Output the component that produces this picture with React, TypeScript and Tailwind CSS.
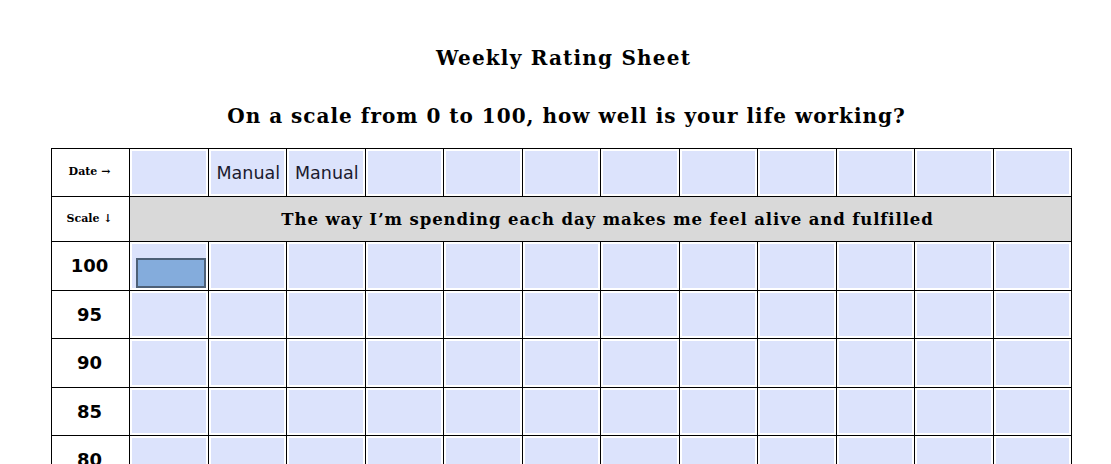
const dates = ["", "Manual", "Manual", "", "", "", "", "", "", "", "", ""];
const scale = [100, 95, 90, 85, 80];

export default function App() {
  return (
    <div className="min-h-screen bg-white pt-[44px] pl-[51px] font-['DejaVu_Serif',serif] text-black">
      <div className="w-[1021px]">
        <h1 className="text-center text-[20px] font-bold leading-[28px] tracking-[1.2px] pl-[4px]">Weekly Rating Sheet</h1>
        <h2 className="mt-[30px] text-center text-[20px] font-bold leading-[28px] tracking-[1px] pl-[10px]">
          On a scale from 0 to 100, how well is your life working?
        </h2>
        <table className="mt-[18px] w-[1021px] table-fixed border-collapse">
          <colgroup>
            <col className="w-[78px]" />
            {dates.map((_, i) => (
              <col key={i} />
            ))}
          </colgroup>
          <tbody>
            <tr className="h-[48px]">
              <td className="border border-black pr-[2px] text-center text-[11px] font-bold">Date →</td>
              {dates.map((d, i) => (
                <td key={i} className="h-[48px] border border-black p-[2px]">
                  <div className="flex h-full items-center bg-[#dce3fc] pl-[6px] pt-[2px] font-['DejaVu_Sans',sans-serif] text-[17.5px] text-[#1a1a2e]">
                    {d}
                  </div>
                </td>
              ))}
            </tr>
            <tr className="h-[45px]">
              <td className="border border-black pr-[2px] text-center text-[11px] font-bold">Scale ↓</td>
              <td colSpan={12} className="border border-black bg-[#d9d9d9] pl-[14px] pt-[2px] text-center text-[16.5px] font-bold tracking-[0.9px]">
                The way I’m spending each day makes me feel alive and fulfilled
              </td>
            </tr>
            {scale.map((s) => (
              <tr key={s} className="h-[48.5px]">
                <td className="border border-black pr-[2px] text-center font-['DejaVu_Sans',sans-serif] text-[18px] font-bold">
                  {s}
                </td>
                {dates.map((_, i) => (
                  <td key={i} className="h-[48.5px] border border-black p-[2px]">
                    <div className="relative h-full bg-[#dce3fc]">
                      {s === 100 && i === 0 && (
                        <div className="absolute left-[4px] right-0 bottom-0 h-[30px] border-2 border-[#4d6077] bg-[#84acdc]" />
                      )}
                    </div>
                  </td>
                ))}
              </tr>
            ))}
          </tbody>
        </table>
      </div>
    </div>
  );
}
